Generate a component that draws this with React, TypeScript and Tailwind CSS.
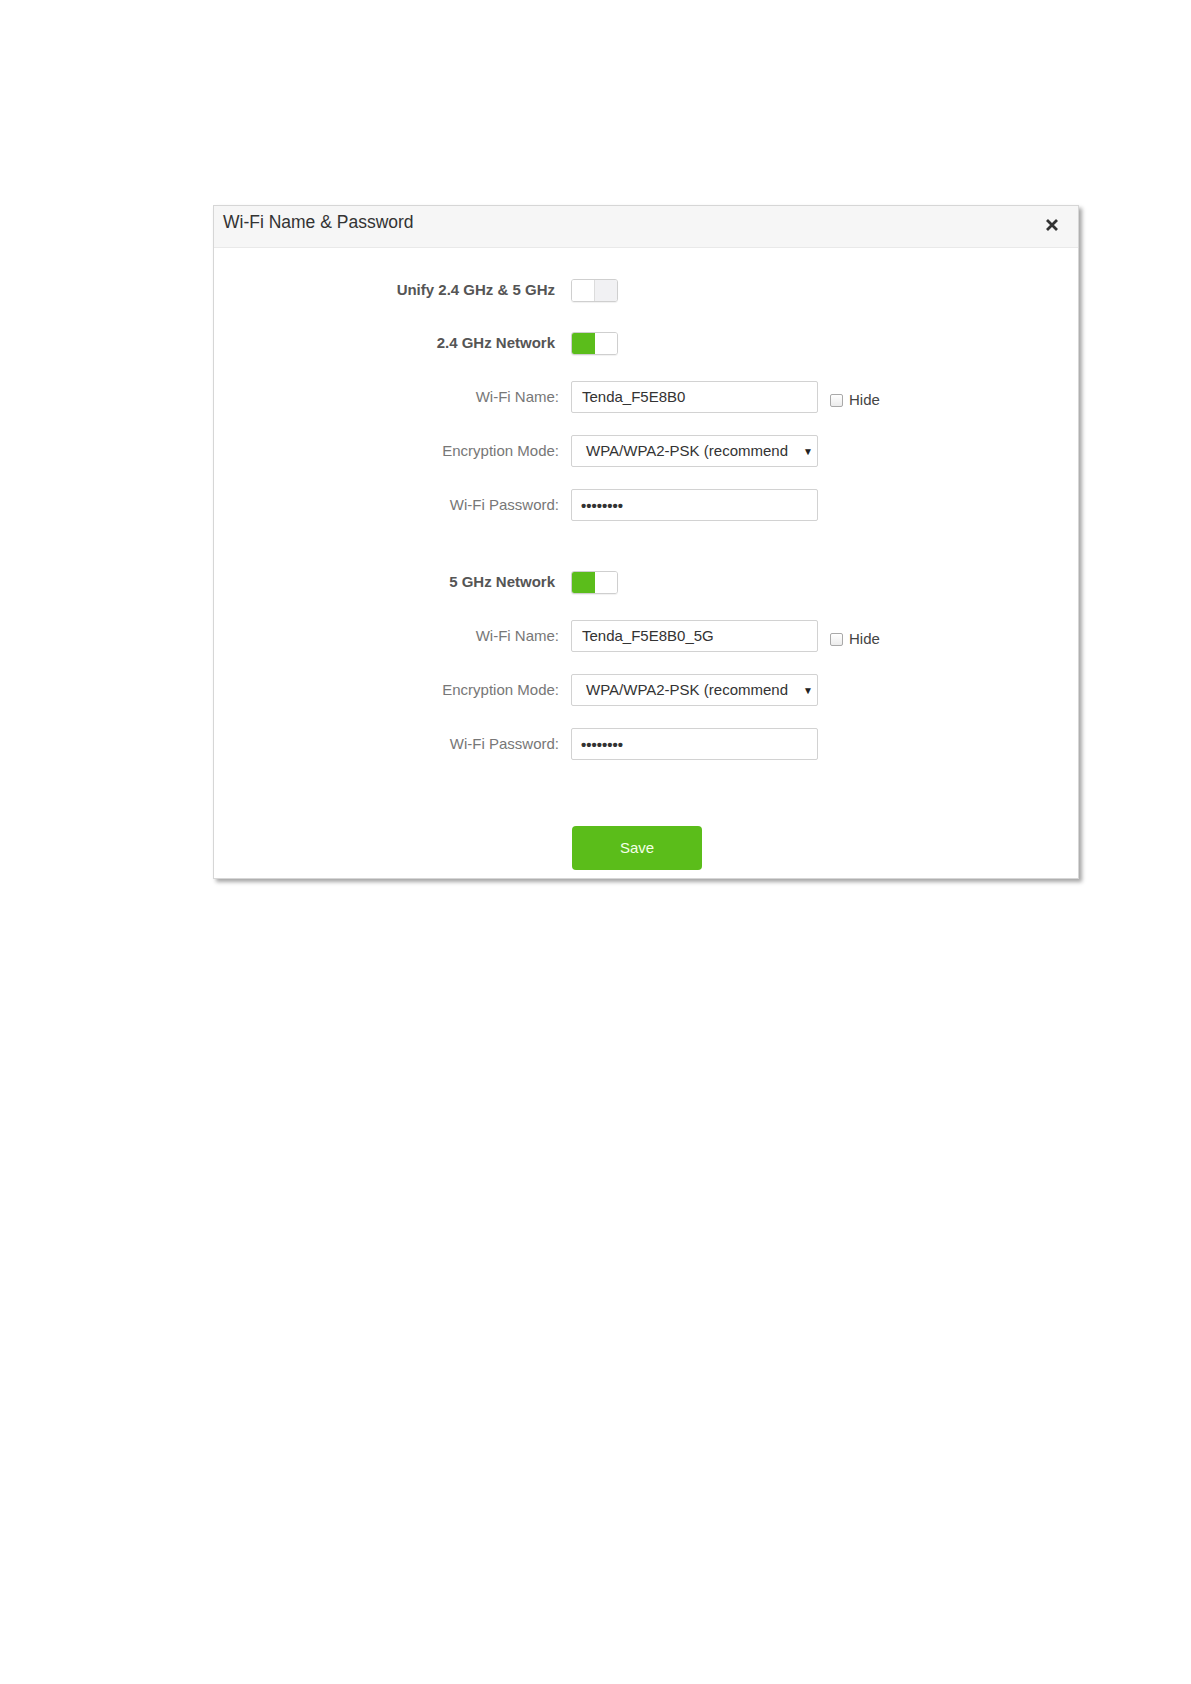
import React from "react";

const font = { fontFamily: '"Liberation Sans", Arial, sans-serif' };

function Toggle({ on }: { on: boolean }) {
  return (
    <div className="flex h-[23px] w-[47px] overflow-hidden rounded-[3px] border border-[#cfcfcf] shadow-[0_1px_1px_rgba(0,0,0,0.06)]">
      {on ? (
        <>
          <div className="h-full w-[23px] bg-[#5bbd1b]" />
          <div className="h-full flex-1 bg-white" />
        </>
      ) : (
        <>
          <div className="h-full w-[23px] border-r border-[#dcdcdc] bg-white" />
          <div className="h-full flex-1 bg-[#f1f1f3]" />
        </>
      )}
    </div>
  );
}

function ToggleRow({ label, on, mt }: { label: string; on: boolean; mt: string }) {
  return (
    <div className={`flex items-center ${mt}`}>
      <div className="w-[341px] text-right text-[15px] font-bold text-[#555]">{label}</div>
      <div className="ml-[16px]">
        <Toggle on={on} />
      </div>
    </div>
  );
}

function FieldRow({
  label,
  mt,
  children,
  hide,
}: {
  label: string;
  mt: string;
  children: React.ReactNode;
  hide?: boolean;
}) {
  return (
    <div className={`flex items-center ${mt}`}>
      <div className="w-[345px] text-right text-[15px] text-[#777]">{label}</div>
      <div className="ml-[12px] flex h-[32px] w-[247px] items-center overflow-hidden rounded-[2px] border border-[#d2d2d2] bg-white">
        {children}
      </div>
      {hide && (
        <div className="ml-[12px] mt-[7px] flex items-center">
          <span className="h-[13px] w-[13px] rounded-[2px] border border-[#a9a9a9] bg-gradient-to-b from-white to-[#ececec]" />
          <span className="ml-[6px] text-[15px] text-[#444]">Hide</span>
        </div>
      )}
    </div>
  );
}

function Section({ name }: { name: string }) {
  return (
    <>
      <FieldRow label="Wi-Fi Name:" mt="mt-[26px]" hide>
        <span className="pl-[10px] text-[15px] text-[#333]">{name}</span>
      </FieldRow>
      <FieldRow label="Encryption Mode:" mt="mt-[22px]">
        <span className="w-[220px] shrink-0 overflow-hidden whitespace-nowrap pl-[14px] text-[15px] text-[#333]">
          WPA/WPA2-PSK (recommend
        </span>
        <span className="ml-[11px] text-[10px] text-[#222]">▼</span>
      </FieldRow>
      <FieldRow label="Wi-Fi Password:" mt="mt-[22px]">
        <span className="pl-[9px] text-[15px] font-bold leading-none text-[#333]">••••••••</span>
      </FieldRow>
    </>
  );
}

export default function App() {
  return (
    <div className="min-h-[1684px] w-[1191px] bg-white pl-[213px] pt-[205px]" style={font}>
      <div className="w-[866px] border border-[#d6d6d6] bg-white pb-[8px] shadow-[3px_3px_4px_rgba(0,0,0,0.35)]">
        <div className="flex h-[42px] items-center justify-between border-b border-[#e9e9e9] bg-[#f6f6f6] pl-[9px] pr-[19px]">
          <span className="mb-[8px] text-[17.5px] text-[#333]">Wi-Fi Name &amp; Password</span>
          <svg width="14" height="14" viewBox="0 0 14 14" className="mb-[4px]">
            <path d="M2 2 L12 12 M12 2 L2 12" stroke="#333" strokeWidth="2.8" strokeLinecap="butt" />
          </svg>
        </div>
        <div className="flex flex-col">
          <ToggleRow label="Unify 2.4 GHz & 5 GHz" on={false} mt="mt-[31px]" />
          <ToggleRow label="2.4 GHz Network" on={true} mt="mt-[30px]" />
          <Section name="Tenda_F5E8B0" />
          <ToggleRow label="5 GHz Network" on={true} mt="mt-[50px]" />
          <Section name="Tenda_F5E8B0_5G" />
          <div className="mt-[66px] pl-[358px]">
            <button className="flex h-[44px] w-[130px] items-center justify-center rounded-[4px] bg-[#5bbd1a] text-[15px] text-[#f4ffe8]">
              Save
            </button>
          </div>
        </div>
      </div>
    </div>
  );
}
